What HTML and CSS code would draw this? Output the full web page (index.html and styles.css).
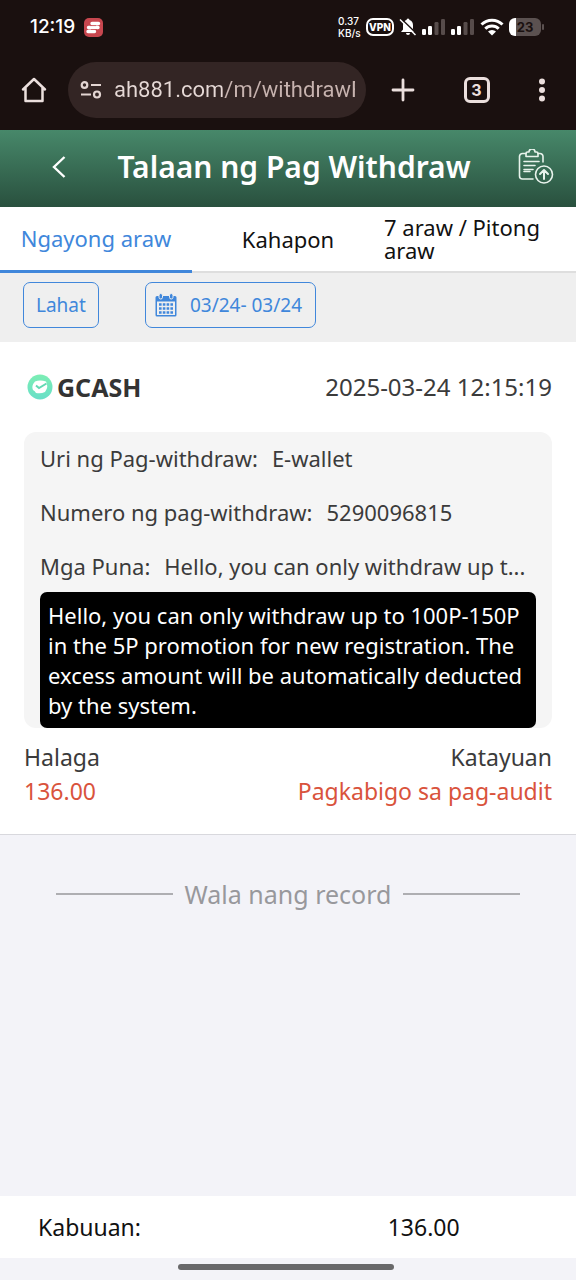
FILE: index.html
```html
<!DOCTYPE html>
<html lang="fil">
<head>
<meta charset="utf-8">
<meta name="viewport" content="width=device-width, initial-scale=1">
<title>Talaan ng Pag Withdraw</title>
<link rel="stylesheet" href="styles.css">
</head>
<body>
<div class="screen">
  <div class="browser">
    <div class="status">
      <span class="clock">12:19</span>
      <svg class="app-badge" width="19" height="19" viewBox="0 0 19 19"><rect width="19" height="19" rx="5" fill="#c8474f"/><path d="M8 5.500H14.500M4.500 9.500H14M4 13.500H10.500" stroke="#fff" stroke-width="3.400" stroke-linecap="round" fill="none"/><path d="M6 7.600H12M7 11.500H13" stroke="#c8474f" stroke-width=".7"/></svg>
      <div class="status-right">
        <span class="speed">0.37 KB/s</span>
        <span class="vpn">VPN</span>
        <svg class="bell" width="18" height="18" viewBox="0 0 18 18"><path d="M9 .5a1.500 1.500 0 0 1 1.500 1.500C13 2.700 14 4.800 14 7.200V11.500L16 14H2L4 11.500V7.200C4 4.800 5 2.700 7.500 2A1.500 1.500 0 0 1 9 .5ZM7 15H11A2 2 0 0 1 7 15Z" fill="#fff"/><path d="M2.500 1L18 16" stroke="#1a100f" stroke-width="1.500"/><path d="M1 1.500L16.500 17" stroke="#fff" stroke-width="1.500"/></svg>
        <svg class="signal" width="24" height="18" viewBox="0 0 24 18"><g fill="#fff"><rect x="0" y="11" width="4" height="6" rx="1.200"/><rect x="6" y="8" width="4" height="9" rx="1.200"/></g><g fill="#574c4b"><rect x="12.500" y="4" width="4" height="13" rx="1.200"/><rect x="19" y="1" width="4" height="16" rx="1.200"/></g></svg>
        <svg class="signal" width="24" height="18" viewBox="0 0 24 18"><g fill="#fff"><rect x="0" y="11" width="4" height="6" rx="1.200"/><rect x="6" y="8" width="4" height="9" rx="1.200"/></g><g fill="#574c4b"><rect x="12.500" y="4" width="4" height="13" rx="1.200"/><rect x="19" y="1" width="4" height="16" rx="1.200"/></g></svg>
        <svg class="wifi" width="24" height="18" viewBox="0 0 24 18"><path d="M1.500 6.500A15 15 0 0 1 22.500 6.500M5.300 10.800A9.500 9.500 0 0 1 18.700 10.800" stroke="#fff" stroke-width="3" fill="none"/><path d="M12 17.500L8 13.600A5.800 5.800 0 0 1 16 13.600Z" fill="#fff"/></svg>
        <span class="battery">23</span>
      </div>
    </div>
    <div class="toolbar">
      <button class="icon-button" aria-label="Home"><svg width="26" height="26" viewBox="0 0 26 26"><path d="M2 12.500L13 2L24 12.500M4.500 11V24H21.500V11" fill="none" stroke="#ebdfdd" stroke-width="2.500" stroke-linejoin="round" stroke-linecap="round"/></svg></button>
      <div class="omnibox">
        <svg width="22" height="18" viewBox="0 0 22 18"><g fill="none" stroke="#e3d5d2" stroke-width="2.200"><circle cx="4.500" cy="4" r="2.800"/><circle cx="17" cy="13.500" r="3"/><path d="M11 4H21M1 13.500H11"/></g></svg>
        <input class="url" type="text" aria-label="Address" value="ah881.com/m/withdrawF" readonly>
      </div>
      <div class="tools">
        <button class="icon-button" aria-label="New tab"><svg width="24" height="24" viewBox="0 0 24 24"><path d="M12 2V22M2 12H22" stroke="#ebdfdd" stroke-width="2.800" stroke-linecap="round"/></svg></button>
        <button class="tab-count" aria-label="Open tabs">3</button>
        <button class="icon-button" aria-label="Menu"><svg width="8" height="24" viewBox="0 0 8 24" fill="#ebdfdd"><circle cx="4" cy="3.500" r="3"/><circle cx="4" cy="12" r="3"/><circle cx="4" cy="20.500" r="3"/></svg></button>
      </div>
    </div>
  </div>

  <header class="header">
    <button class="icon-button" aria-label="Back"><svg width="14" height="22" viewBox="0 0 14 22"><path d="M12.500 1L2 11L12.500 21" fill="none" stroke="#fff" stroke-width="2.400"/></svg></button>
    <h1 class="title">Talaan ng Pag Withdraw</h1>
    <button class="icon-button" aria-label="Records"><svg width="36" height="36" viewBox="0 0 36 36"><g fill="none" stroke="#e8f3ec" stroke-width="1.600" stroke-linecap="round" stroke-linejoin="round"><path d="M8 4.500H4.500A3 3 0 0 0 1.500 7.500V27A3 3 0 0 0 4.500 30H15M20 4.500H22A3 3 0 0 1 25 7.500V13"/><path d="M8 7.500V4.500A1.500 1.500 0 0 1 9.500 3H11A3 3 0 0 1 17 3H18.500A1.500 1.500 0 0 1 20 4.500V7.500Z"/><path d="M6 12.500H21M6 16.500H17M6 20.500H15M6 22.500H12"/><circle cx="26" cy="25.500" r="8.500"/><path d="M26 30V21M22 25L26 21L30 25" stroke-width="2"/></g></svg></button>
  </header>

  <nav class="tabs">
    <button class="tab tab-active">Ngayong araw</button>
    <button class="tab">Kahapon</button>
    <button class="tab tab-long">7 araw / Pitong araw</button>
  </nav>

  <div class="filters">
    <button class="filter">Lahat</button>
    <button class="filter filter-date"><svg width="22" height="24" viewBox="0 0 22 24"><path d="M2 3H20A1.500 1.500 0 0 1 21.500 4.500V22A1.500 1.500 0 0 1 20 23.500H2A1.500 1.500 0 0 1 .5 22V4.500A1.500 1.500 0 0 1 2 3Z" fill="#4087db"/><path d="M2 8.500H20V22H2Z" fill="#efefef"/><g stroke="#efefef" stroke-width="1" fill="#4087db"><rect x="4" y=".5" width="3.500" height="5.500" rx="1.700"/><rect x="14.500" y=".5" width="3.500" height="5.500" rx="1.700"/></g><path d="M4 11.500H18M4 15.500H18M4 19.500H18" stroke="#4087db" stroke-width="2.600" stroke-dasharray="2.600 1.200"/></svg><span>03/24- 03/24</span></button>
  </div>

  <main class="content">
    <article class="record">
      <div class="record-head">
        <svg width="26" height="26" viewBox="0 0 26 26"><defs><linearGradient id="mint" x1="0" y1="0" x2="0" y2="1"><stop offset="0" stop-color="#7ceeb4"/><stop offset="1" stop-color="#68dfc8"/></linearGradient></defs><circle cx="13" cy="13" r="12.500" fill="url(#mint)"/><path d="M8 7.500Q13 5.500 19 7.500Q22 13 18 18Q14 20 9 19Q8 17 6 16Q4 12 8 7.500Z" fill="#fff"/><path d="M9 11.500L12 14L19.500 9.500" fill="none" stroke="#62d9b3" stroke-width="2"/></svg>
        <h2 class="wallet">GCASH</h2>
        <time class="time">2025-03-24 12:15:19</time>
      </div>
      <div class="details">
        <p class="row"><span>Uri ng Pag-withdraw:</span><span>E-wallet</span></p>
        <p class="row"><span>Numero ng pag-withdraw:</span><span>5290096815</span></p>
        <p class="row"><span>Mga Puna:</span><span>Hello, you can only withdraw up t...</span></p>
        <p class="tooltip">Hello, you can only withdraw up to 100P-150P in the 5P promotion for new registration. The excess amount will be automatically deducted by the system.</p>
      </div>
      <div class="summary"><span>Halaga</span><span>Katayuan</span></div>
      <div class="summary summary-alert"><span>136.00</span><span>Pagkabigo sa pag-audit</span></div>
    </article>
    <p class="end">Wala nang record</p>
  </main>

  <footer class="total"><span class="total-label">Kabuuan:</span><span>136.00</span></footer>
  <div class="gesture"><div class="gesture-bar"></div></div>
</div>
</body>
</html>
```
FILE: styles.css
```css
* { box-sizing: border-box; }
body { margin: 0; font-family: "Noto Sans", "Open Sans", sans-serif; color: #3b3b3b; background: #f3f3f8; }
button { font: inherit; color: inherit; background: none; border: 0; padding: 0; }
h1, h2, p { margin: 0; }
svg { display: block; flex: none; }
.screen { display: flex; flex-direction: column; min-height: 100vh; }
.icon-button { display: flex; }

.browser { background: #1a100f; color: #fff; }
.status { display: flex; align-items: center; height: 54px; padding: 0 35px 0 30px; }
.clock { font: 500 19px/24px Inter, sans-serif; margin-right: 9px; }
.status-right { margin-left: auto; display: flex; align-items: center; gap: 5px; }
.speed { width: 23px; font: 500 10px/12px Inter, sans-serif; }
.vpn { border: 2px solid #fff; border-radius: 7px; width: 28px; font: 800 10px/14px Inter, sans-serif; text-align: center; }
.battery { position: relative; width: 32px; border-radius: 6px; background: linear-gradient(90deg, #fff 7px, #5b5150 7px); color: #1a100f; font: 700 13px/18px Inter, sans-serif; text-align: center; }
.battery::after { content: ""; position: absolute; right: -3px; top: 6px; width: 2px; height: 6px; background: #5b5150; border-radius: 1px; }
.toolbar { display: flex; align-items: center; height: 76px; padding: 0 30px 4px 21px; }
.omnibox { display: flex; align-items: center; gap: 12px; width: 298px; height: 56px; margin-left: 21px; padding: 0 11px 0 12px; border-radius: 28px; background: #332524; }
.url { flex: 1; min-width: 0; padding: 0; border: 0; outline: 0; font: 400 22px/30px Roboto, sans-serif; color: transparent; background: linear-gradient(90deg, #e6d9d6 45%, #c7b3af 45%); background-clip: text; -webkit-background-clip: text; }
.tools { flex: 1; display: flex; align-items: center; justify-content: space-between; margin-left: 25px; }
.tab-count { width: 26px; height: 26px; border: 3px solid #ebdfdd; border-radius: 6px; color: #ebdfdd; font: 700 16px/20px Inter, sans-serif; }

.header { display: flex; align-items: center; height: 77px; padding: 0 22px 4px 52px; background: linear-gradient(#47886a, #29503e); color: #fff; }
.title { flex: 1; padding-left: 4px; text-align: center; font-size: 30px; line-height: 40px; font-weight: 600; }

.tabs { display: grid; grid-template-columns: repeat(3, 1fr); height: 66px; background: #fff; color: #111; font-size: 22px; line-height: 23px; }
.tab { border-bottom: 2px solid #dedede; }
.tab-active { color: #4087db; border-bottom: 3px solid #4087db; }
.tab-long { text-align: left; }

.filters { display: flex; gap: 46px; height: 69px; padding: 9px 23px 14px; background: #efefef; color: #4087db; font-size: 19px; }
.filter { display: flex; align-items: center; gap: 13px; padding: 0 12px; border: 1px solid #4087db; border-radius: 7px; }
.filter-date { padding: 0 13px 0 9px; }

.content { flex: 1; }
.record { padding: 0 24px 28px; background: #fff; border-bottom: 1px solid #d8d8dd; font-size: 22px; line-height: 30px; }
.record-head { display: flex; align-items: center; height: 90px; padding-left: 3px; }
.wallet { margin-left: 4px; font-size: 25px; line-height: 30px; font-weight: 700; color: #333; }
.time { margin-left: auto; font-size: 24px; }
.details { padding: 0 16px; border-radius: 12px; background: #f5f5f5; }
.row { display: flex; gap: 14px; height: 54px; line-height: 52px; white-space: nowrap; }
.tooltip { margin-top: -2px; padding: 8px; border-radius: 7px; background: #000; color: #fff; }
.summary { display: flex; justify-content: space-between; padding-top: 14px; font-size: 23px; }
.summary-alert { padding-top: 4px; color: #d9533c; }
.end { display: flex; align-items: center; gap: 12px; padding: 43px 56px; color: #98989c; font-size: 25px; line-height: 32px; }
.end::before, .end::after { content: ""; flex: 1; height: 2px; background: #aeaeb2; }

.total { display: flex; align-items: center; height: 62px; padding-left: 38px; background: #fff; color: #111; font-size: 23px; }
.total-label { width: 65%; }
.gesture { display: flex; justify-content: center; height: 22px; padding: 6px 0 0; }
.gesture-bar { width: 216px; height: 6px; margin-right: 4px; border-radius: 3px; background: #68686a; }
```
